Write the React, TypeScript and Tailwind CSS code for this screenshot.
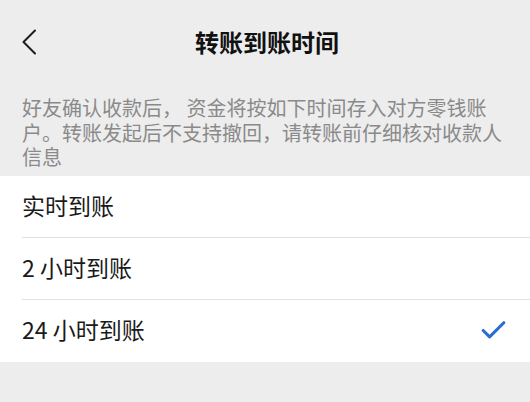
import { Check } from 'lucide-react';

const options = ['实时到账', '2 小时到账', '24 小时到账'];

export default function App() {
  const selected = 2;
  return (
    <div className="w-[530px] h-[402px] bg-[#ededed] overflow-hidden" style={{ fontFamily: '"Noto Sans CJK SC", "Noto Sans", sans-serif' }}>
      {/* Header */}
      <div className="relative h-[84px] flex items-center justify-center">
        <svg className="absolute left-[20px] top-[29px]" width="18" height="26" viewBox="0 0 18 26" fill="none">
          <path d="M15 1.5 L3.5 13 L15 24.5" stroke="#1c1c1c" strokeWidth="2" strokeLinecap="round" strokeLinejoin="round" />
        </svg>
        <h1 className="text-[24px] font-bold text-[#111] pl-[4px]">转账到账时间</h1>
      </div>

      {/* Notice */}
      <p className="pl-[22px] pr-[26px] pt-[12px] pb-[6px] text-[20px] leading-[24.5px] text-[#8a8a8a]">
        好友确认收款后， 资金将按如下时间存入对方零钱账户。转账发起后不支持撤回，请转账前仔细核对收款人信息
      </p>

      {/* Options */}
      <div className="bg-white">
        {options.map((label, i) => (
          <div key={label} className="pl-[22px]">
            <div className={`h-[62px] flex items-center justify-between pr-[21px] ${i < options.length - 1 ? 'border-b border-[#e2e2e2]' : ''}`}>
              <span className="text-[23px] leading-none text-[#1a1a1a] pb-[2px]">{label}</span>
              {i === selected && <Check className="w-[31px] h-[31px] text-[#2a6fcf]" strokeWidth={2.4} />}
            </div>
          </div>
        ))}
      </div>
    </div>
  );
}
